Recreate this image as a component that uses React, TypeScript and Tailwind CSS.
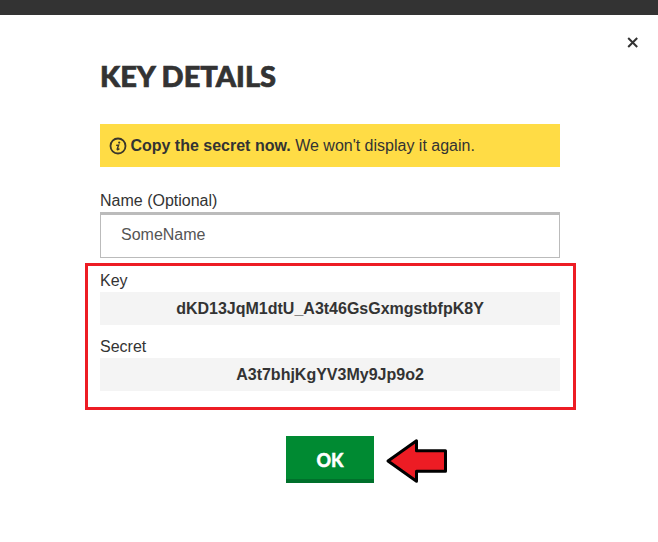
const credentials = [
  { label: "Key", value: "dKD13JqM1dtU_A3t46GsGxmgstbfpK8Y" },
  { label: "Secret", value: "A3t7bhjKgYV3My9Jp9o2" },
]

function InfoIcon() {
  return (
    <svg width="18" height="18" viewBox="0 0 18 18" fill="none" className="mt-[2px] mr-[3px] shrink-0">
      <circle cx="9" cy="9" r="7.5" stroke="#3a362b" strokeWidth="1.8" />
      <circle cx="10.2" cy="5.6" r="1.1" fill="#3a362b" />
      <path d="M7.1 8.4 9.6 8 8.2 12.2Q8.1 13 9 12.6L10.4 11.7" stroke="#3a362b" strokeWidth="1.4" />
    </svg>
  )
}

function PointerArrow() {
  return (
    <svg width="62" height="46" viewBox="0 0 62 46" className="absolute top-[2px] left-[100px]">
      <path
        d="M2 23 30.5 2.8V12.8H59.5V33.2H30.5V43.2Z"
        fill="#ed1c24"
        stroke="#000"
        strokeWidth="3"
        strokeLinejoin="round"
      />
    </svg>
  )
}

function CloseButton() {
  return (
    <button aria-label="Close" className="mt-[22px] mr-5 flex h-[11px] w-[11px] items-center justify-center">
      <svg width="11" height="11" viewBox="0 0 11 11">
        <path d="M1.2 1 10.2 10M10.2 1 1.2 10" stroke="#333" strokeWidth="2" />
      </svg>
    </button>
  )
}

export default function App() {
  return (
    <div className="h-[542px] w-[658px] overflow-hidden bg-white font-['Liberation_Sans',Arial,sans-serif] text-base leading-6 text-[#333]">
      <div className="h-[15px] bg-[#333]" />
      <div className="flex justify-end">
        <CloseButton />
      </div>

      <main className="mx-[100px] w-[460px]">
        <h1 className="pt-[10px] font-['Lato',sans-serif] text-[29px] leading-9 font-black whitespace-nowrap [-webkit-text-stroke:0.7px_#333]">
          KEY DETAILS
        </h1>

        <div className="mt-[30px] flex h-[43px] bg-[#ffdc45] pt-[11px] pl-[9px]">
          <InfoIcon />
          <p className="-mt-[1px] pl-[0.4px]">
            <strong>Copy the secret now.</strong> We won't display it again.
          </p>
        </div>

        <label className="mt-[21px] block h-6 pt-px" htmlFor="name">
          Name (Optional)
        </label>
        <input
          id="name"
          defaultValue="SomeName"
          className="block h-[46px] w-full border border-t-[3px] border-[#bbb] px-5 pb-[2px] text-[#555] outline-none"
        />

        <section className="-mx-[15px] mt-[5px] h-[147px] w-[491px] border-[3px] border-[#ed1c24] px-3 pt-[2px]">
          {credentials.map((item) => (
            <div key={item.label} className="mb-[9px] w-[460px]">
              <div className="h-6 pt-px">{item.label}</div>
              <div className="h-[33px] bg-[#f4f4f4] pt-[5px] text-center font-bold">{item.value}</div>
            </div>
          ))}
        </section>

        <div className="relative mt-[26px] ml-[186px] w-[88px]">
          <button className="block h-[47px] w-full border-b-4 border-[#00702b] bg-[#008a32] pt-[5px] font-['Lato',sans-serif] text-lg font-black text-white [-webkit-text-stroke:0.4px_#fff]">
            OK
          </button>
          <PointerArrow />
        </div>
      </main>
    </div>
  )
}
